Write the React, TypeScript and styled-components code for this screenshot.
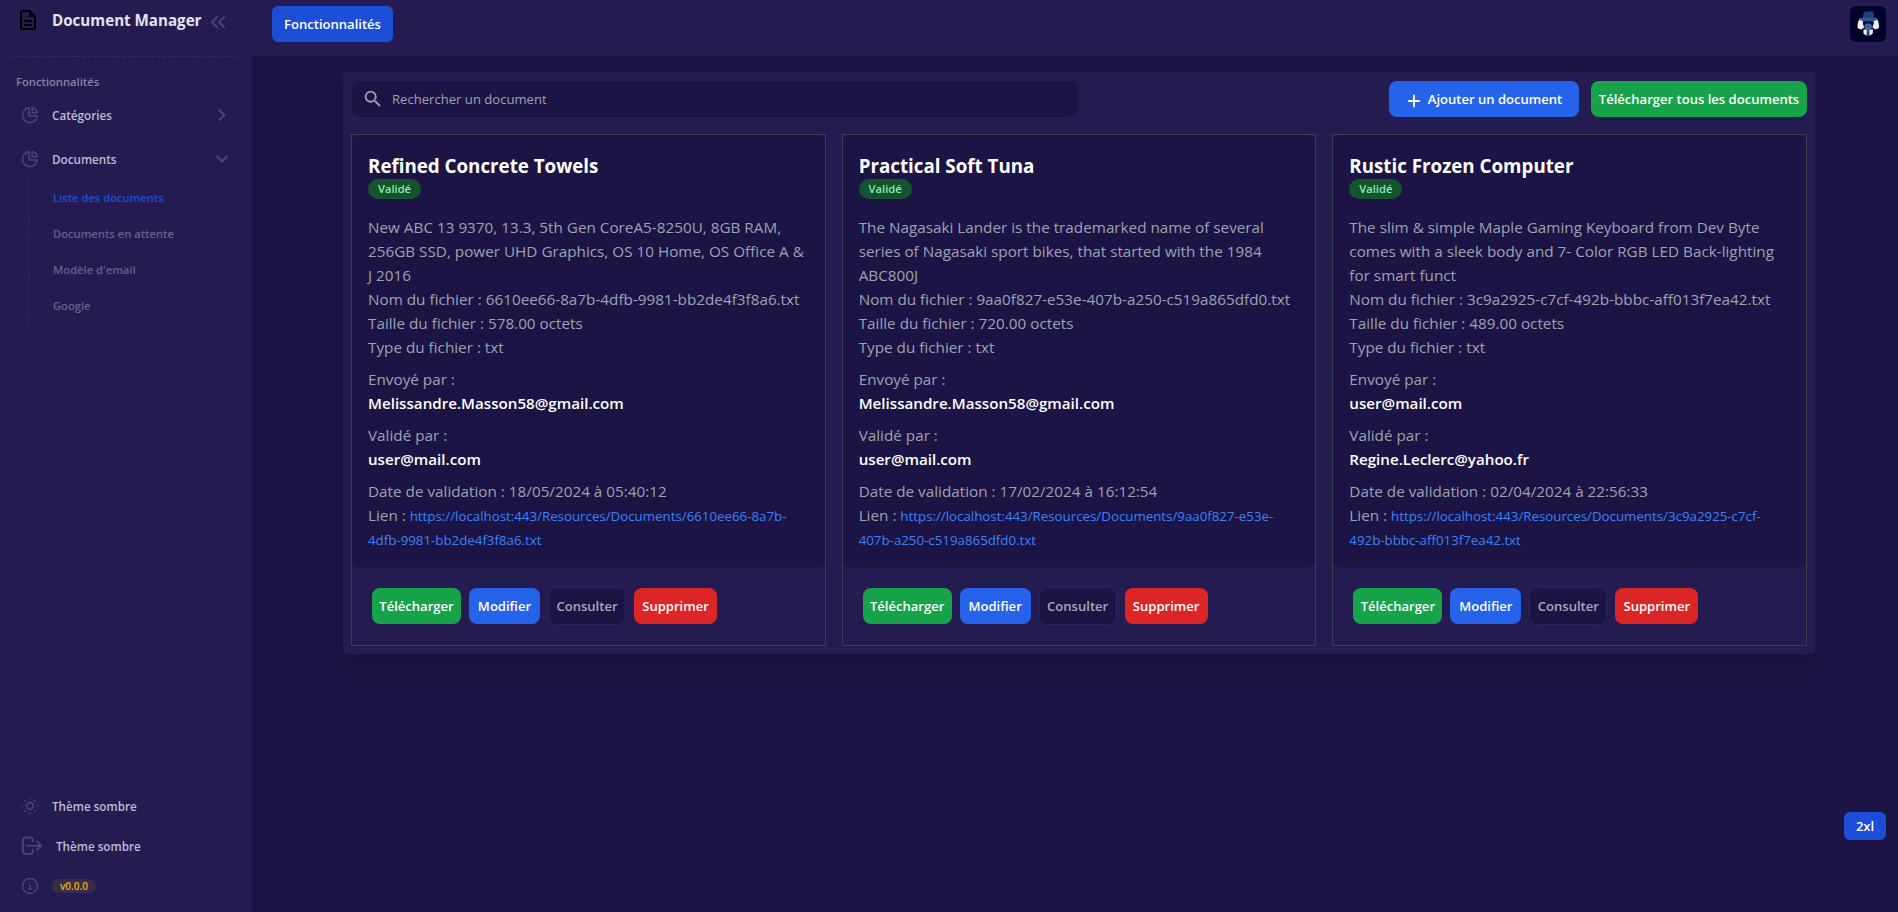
import React from 'react';
import styled, { createGlobalStyle, css } from 'styled-components';
import { MdOutlineDescription, MdSearch } from 'react-icons/md';
import { ChevronRight, ChevronDown, ChevronsLeft } from 'lucide-react';

const color = {
  base: '#1c1444',
  panel: '#241c50',
  line: '#362d66',
  icon: '#4a4279',
  text: '#bebbd2',
  muted: '#65608a',
};

const GlobalStyle = createGlobalStyle`
  *, *::before, *::after { box-sizing: border-box; }
  body {
    margin: 0;
    background: ${color.base};
    color: ${color.text};
    font-family: 'Open Sans', 'Noto Sans', sans-serif;
    font-size: 15.27px;
    line-height: 24px;
  }
  h1, h2, p { margin: 0; }
  button { font: inherit; border: 0; padding: 0; background: none; color: inherit; cursor: pointer; }
`;

const Shell = styled.div`
  display: grid;
  grid-template-columns: 252px 1fr;
  height: 100vh;
  overflow: hidden;
`;

/* Sidebar */
const Sidebar = styled.aside`
  display: flex;
  flex-direction: column;
  background: ${color.panel};
`;

const Brand = styled.div`
  display: flex;
  align-items: center;
  height: 40px;
  padding: 0 0 0 16px;
  color: #000;
`;

const BrandName = styled.h1`
  margin: 0 5px 0 12px;
  width: 149px;
  font-size: 15.15px;
  line-height: 24px;
  font-weight: 700;
  color: #e4e3ec;
  white-space: nowrap;
`;

const Collapse = styled.button`
  display: flex;
  margin-top: 4px;
  color: ${color.icon};
`;

const Dashes = styled.hr`
  width: 224px;
  margin: 16px 0 0 12px;
  border: 0;
  border-top: 1px dashed ${color.line};
`;

const SectionLabel = styled.div`
  margin: 15px 0 11px 16px;
  font-size: 11.2px;
  line-height: 20px;
  font-weight: 600;
  color: #8783a2;
`;

const NavItem = styled.a`
  display: flex;
  align-items: center;
  gap: 12px;
  height: 24px;
  margin-bottom: 20px;
  padding: 0 22px 0 20px;
  color: ${color.text};
  font-size: 11.7px;
  font-weight: 600;
  svg { flex: none; color: ${color.icon}; }
  svg:last-child:not(:first-child) { margin-left: auto; }
`;

const SubMenu = styled.div`
  display: flex;
  flex-direction: column;
  margin: -10px 0 0 28px;
  border-left: 1px dashed ${color.line};
  height: 144px;
`;

const SubItem = styled.a<{ $active?: boolean }>`
  height: 36px;
  padding-left: 24px;
  font-size: 11.2px;
  line-height: 33px;
  font-weight: 600;
  color: ${(p) => (p.$active ? '#1d4ed8' : color.muted)};
`;

const SidebarFooter = styled.div`
  display: flex;
  flex-direction: column;
  gap: 16px;
  margin-top: auto;
  padding-bottom: 14px;
  ${NavItem} { margin: 0; }
`;

const Version = styled.span`
  height: 14px;
  padding: 0 8px;
  border-radius: 7px;
  background: #3a2d4c;
  color: #eab308;
  font-size: 10px;
  line-height: 15px;
`;

/* Main column */
const Main = styled.main`
  display: flex;
  flex-direction: column;
  min-width: 0;
`;

const TopBar = styled.header`
  display: flex;
  justify-content: space-between;
  height: 56px;
  padding: 6px 12px 0 20px;
  background: ${color.panel};
`;

const tones = {
  green: css`background: #16a34a; color: #fff;`,
  blue: css`background: #2563eb; color: #fff;`,
  royal: css`background: #1d4ed8; color: #fff;`,
  red: css`background: #dc2626; color: #fff;`,
  ghost: css`
    height: 38px;
    background: ${color.base};
    color: #a9a6bb;
    border: 1px solid #2c2359;
  `,
};

const Button = styled.button<{ $tone: keyof typeof tones; $width: number; $radius?: number }>`
  display: flex;
  align-items: center;
  justify-content: center;
  flex: none;
  width: ${(p) => p.$width}px;
  height: 36px;
  border-radius: ${(p) => p.$radius ?? 8}px;
  font-size: 13.05px;
  line-height: 20px;
  font-weight: 600;
  white-space: nowrap;
  ${(p) => tones[p.$tone]}
`;

const Avatar = styled.svg`
  width: 36px;
  height: 36px;
`;

const Panel = styled.section`
  display: flex;
  flex-direction: column;
  width: 1472px;
  margin: 16px 0 0 91px;
  padding: 9px 8px 8px;
  border-radius: 4px;
  background: ${color.panel};
  box-shadow: 0 20px 25px -5px rgb(0 0 0 / 0.1), 0 8px 10px -6px rgb(0 0 0 / 0.1);
`;

const Toolbar = styled.div`
  display: flex;
  gap: 12px;
  padding-left: 1px;
  margin-bottom: 17px;
`;

const SearchBox = styled.label`
  display: flex;
  align-items: center;
  gap: 8px;
  width: 726px;
  height: 36px;
  margin-right: auto;
  padding-left: 10px;
  border-radius: 8px;
  background: ${color.base};
  color: #9ca3af;
  font-size: 13.1px;
`;

const CardGrid = styled.div`
  display: grid;
  grid-template-columns: repeat(3, 1fr);
  gap: 16px;
`;

const Card = styled.article`
  border: 1px solid #374151;
`;

const CardBody = styled.div`
  height: 432px;
  padding: 16px;
  border-radius: 8px;
  background: ${color.base};
  color: #9ca3af;
  box-shadow: 0 1px 3px rgb(0 0 0 / 0.12);
`;

const CardTitle = styled.h2`
  font-size: 18.75px;
  line-height: 30px;
  height: 28px;
  font-weight: 700;
  color: #fff;
`;

const Badge = styled.div`
  width: 53px;
  height: 20px;
  margin-bottom: 16px;
  border-radius: 10px;
  background: #14532d;
  color: #86efac;
  font-size: 11.2px;
  line-height: 20px;
  font-weight: 600;
  text-align: center;
`;

const Info = styled.div`
  margin-bottom: 8px;
  white-space: nowrap;
`;

const Mail = styled.div`
  font-size: 15.15px;
  font-weight: 600;
  color: #fff;
`;

const Link = styled.a`
  font-size: 13.3px;
  line-height: 1;
  color: #3b82f6;
`;

const CardActions = styled.div`
  display: flex;
  align-items: center;
  gap: 8px;
  height: 78px;
  padding-left: 20px;
`;

const Breakpoint = styled.div`
  position: fixed;
  right: 12px;
  bottom: 72px;
  width: 42px;
  height: 28px;
  border-radius: 6px;
  background: #1d4ed8;
  color: #fff;
  font-size: 13px;
  line-height: 28px;
  font-weight: 600;
  text-align: center;
`;

const Line = styled.svg.attrs({ fill: 'none', stroke: 'currentColor', strokeLinecap: 'round', strokeLinejoin: 'round' })``;

const PieIcon = () => (
  <Line width="20" height="20" viewBox="0 0 20 20" strokeWidth="1.6">
    <path d="M9 2.6A7.5 7.5 0 1 0 17.4 11H9z" />
    <path d="M12.2 2.6v5.2h5.2a7.5 7.5 0 0 0-5.2-5.2z" />
  </Line>
);

const SunIcon = () => (
  <Line width="20" height="20" viewBox="0 0 20 20" strokeWidth="1.6">
    <circle cx="10" cy="10" r="3.4" />
    <path d="M10 2.2v.4M10 17.4v.4M2.2 10h.4M17.4 10h.4M4.9 4.9l.2.2M14.9 14.9l.2.2M4.9 15.1l.2-.2M14.9 5.1l.2-.2" />
  </Line>
);

const ExitIcon = () => (
  <Line width="24" height="20" viewBox="0 0 24 20" strokeWidth="1.9">
    <path d="M12.8 5.4V4.2a2.7 2.7 0 0 0-2.7-2.700H5.600a2.700 2.700 0 0 0-2.700 2.700v11a2.700 2.700 0 0 0 2.700 2.700h4.500a2.700 2.700 0 0 0 2.700-2.700V14" />
    <path d="M6.800 9.700h14M16.800 5.200l4.300 4.500-4.300 4.500" />
  </Line>
);

const InfoIcon = () => (
  <Line width="20" height="20" viewBox="0 0 20 20" strokeWidth="1.5">
    <circle cx="10" cy="10" r="7.5" />
    <path d="M10 6.6v.2M9 9.4h1.2v3.8M8.800 13.300h2.600" />
  </Line>
);

const PlusIcon = styled(Line).attrs({ width: 12, height: 16, viewBox: '0 0 12 16', strokeWidth: 1.8 })`
  margin: 4px 8px 0 2px;
`;

const UserAvatar = () => (
  <Avatar viewBox="0 0 36 36">
    <rect width="36" height="36" rx="6" fill="#03022b" />
    <path d="M10 12.500h16.500c2 2 2.900 6.500 2.300 9.800l-3.800 1.200-3-2.500h-7.500l-3 2.500-3.800-1.200c-.5-3.500.3-7.500 2.300-9.800z" fill="#f0f0f2" />
    <path d="M13.300 12.500h9.900l.6 5-2 5.500h-7l-2-5.500z" fill="#0a0a33" />
    <path d="M13.500 23.500h9.500l-.3 4-2 1.700h-5l-2.200-1.700z" fill="#f0f0f2" />
    <path d="M17 23h2.300l.4 6h-3.200z" fill="#27468a" />
    <path d="M12.800 12l.6-5 2.200-1.700 3 .4 3.700-1 1.300 2.200.4 5.100z" fill="#1f3f7d" />
    <path d="M8.600 13.500l4.400-1.900h11l4 1.900-4.500 1.700H13z" fill="#2f5795" />
    <path d="M18.200 17.200l3 1.100.9 2.400-1.300 2.500-2.600.8-2.600-.8-1.400-2.500.9-2.400z" fill="#3e68ad" />
    <path d="M16.800 20.600h2.800" stroke="#24427c" />
  </Avatar>
);

interface Doc {
  title: string;
  lines: string[];
  file: string;
  size: string;
  sender: string;
  validator: string;
  date: string;
  link: [string, string];
}

const docs: Doc[] = [
  {
    title: 'Refined Concrete Towels',
    lines: ['New ABC 13 9370, 13.3, 5th Gen CoreA5-8250U, 8GB RAM,', '256GB SSD, power UHD Graphics, OS 10 Home, OS Office A &', 'J 2016'],
    file: '6610ee66-8a7b-4dfb-9981-bb2de4f3f8a6.txt',
    size: '578.00',
    sender: 'Melissandre.Masson58@gmail.com',
    validator: 'user@mail.com',
    date: '18/05/2024 à 05:40:12',
    link: ['https://localhost:443/Resources/Documents/6610ee66-8a7b-', '4dfb-9981-bb2de4f3f8a6.txt'],
  },
  {
    title: 'Practical Soft Tuna',
    lines: ['The Nagasaki Lander is the trademarked name of several', 'series of Nagasaki sport bikes, that started with the 1984', 'ABC800J'],
    file: '9aa0f827-e53e-407b-a250-c519a865dfd0.txt',
    size: '720.00',
    sender: 'Melissandre.Masson58@gmail.com',
    validator: 'user@mail.com',
    date: '17/02/2024 à 16:12:54',
    link: ['https://localhost:443/Resources/Documents/9aa0f827-e53e-', '407b-a250-c519a865dfd0.txt'],
  },
  {
    title: 'Rustic Frozen Computer',
    lines: ['The slim & simple Maple Gaming Keyboard from Dev Byte', 'comes with a sleek body and 7- Color RGB LED Back-lighting', 'for smart funct'],
    file: '3c9a2925-c7cf-492b-bbbc-aff013f7ea42.txt',
    size: '489.00',
    sender: 'user@mail.com',
    validator: 'Regine.Leclerc@yahoo.fr',
    date: '02/04/2024 à 22:56:33',
    link: ['https://localhost:443/Resources/Documents/3c9a2925-c7cf-', '492b-bbbc-aff013f7ea42.txt'],
  },
];

const DocumentCard = ({ doc }: { doc: Doc }) => (
  <Card>
    <CardBody>
      <CardTitle>{doc.title}</CardTitle>
      <Badge>Validé</Badge>
      <Info>
        {doc.lines.map((line) => (
          <p key={line}>{line}</p>
        ))}
        <p>Nom du fichier : {doc.file}</p>
        <p>Taille du fichier : {doc.size} octets</p>
        <p>Type du fichier : txt</p>
      </Info>
      <Info>
        <p>Envoyé par :</p>
        <Mail>{doc.sender}</Mail>
      </Info>
      <Info>
        <p>Validé par :</p>
        <Mail>{doc.validator}</Mail>
      </Info>
      <Info>
        <p>Date de validation : {doc.date}</p>
        <p>
          Lien : <Link>{doc.link[0]}<br />{doc.link[1]}</Link>
        </p>
      </Info>
    </CardBody>
    <CardActions>
      <Button $tone="green" $width={89}>Télécharger</Button>
      <Button $tone="blue" $width={71}>Modifier</Button>
      <Button $tone="ghost" $width={78}>Consulter</Button>
      <Button $tone="red" $width={83}>Supprimer</Button>
    </CardActions>
  </Card>
);

export default function App() {
  return (
    <>
      <GlobalStyle />
      <Shell>
        <Sidebar>
          <Brand>
            <MdOutlineDescription size={24} />
            <BrandName>Document Manager</BrandName>
            <Collapse><ChevronsLeft size={24} strokeWidth={2} /></Collapse>
          </Brand>
          <Dashes />
          <SectionLabel>Fonctionnalités</SectionLabel>
          <NavItem><PieIcon />Catégories<ChevronRight size={16} strokeWidth={2.8} viewBox="2 2 20 20" /></NavItem>
          <NavItem><PieIcon />Documents<ChevronDown size={16} strokeWidth={2.8} viewBox="2 2 20 20" /></NavItem>
          <SubMenu>
            <SubItem $active>Liste des documents</SubItem>
            <SubItem>Documents en attente</SubItem>
            <SubItem>Modèle d'email</SubItem>
            <SubItem>Google</SubItem>
          </SubMenu>
          <SidebarFooter>
            <NavItem><SunIcon />Thème sombre</NavItem>
            <NavItem><ExitIcon />Thème sombre</NavItem>
            <NavItem><InfoIcon /><Version>v0.0.0</Version></NavItem>
          </SidebarFooter>
        </Sidebar>
        <Main>
          <TopBar>
            <Button $tone="royal" $width={121} $radius={6}>Fonctionnalités</Button>
            <UserAvatar />
          </TopBar>
          <Panel>
            <Toolbar>
              <SearchBox>
                <MdSearch size={22} />
                Rechercher un document
              </SearchBox>
              <Button $tone="blue" $width={190}>
                <PlusIcon><path d="M6 2.500v11M.9 8h10.200" /></PlusIcon>
                Ajouter un document
              </Button>
              <Button $tone="green" $width={216}>Télécharger tous les documents</Button>
            </Toolbar>
            <CardGrid>
              {docs.map((doc) => (
                <DocumentCard key={doc.title} doc={doc} />
              ))}
            </CardGrid>
          </Panel>
        </Main>
      </Shell>
      <Breakpoint>2xl</Breakpoint>
    </>
  );
}
